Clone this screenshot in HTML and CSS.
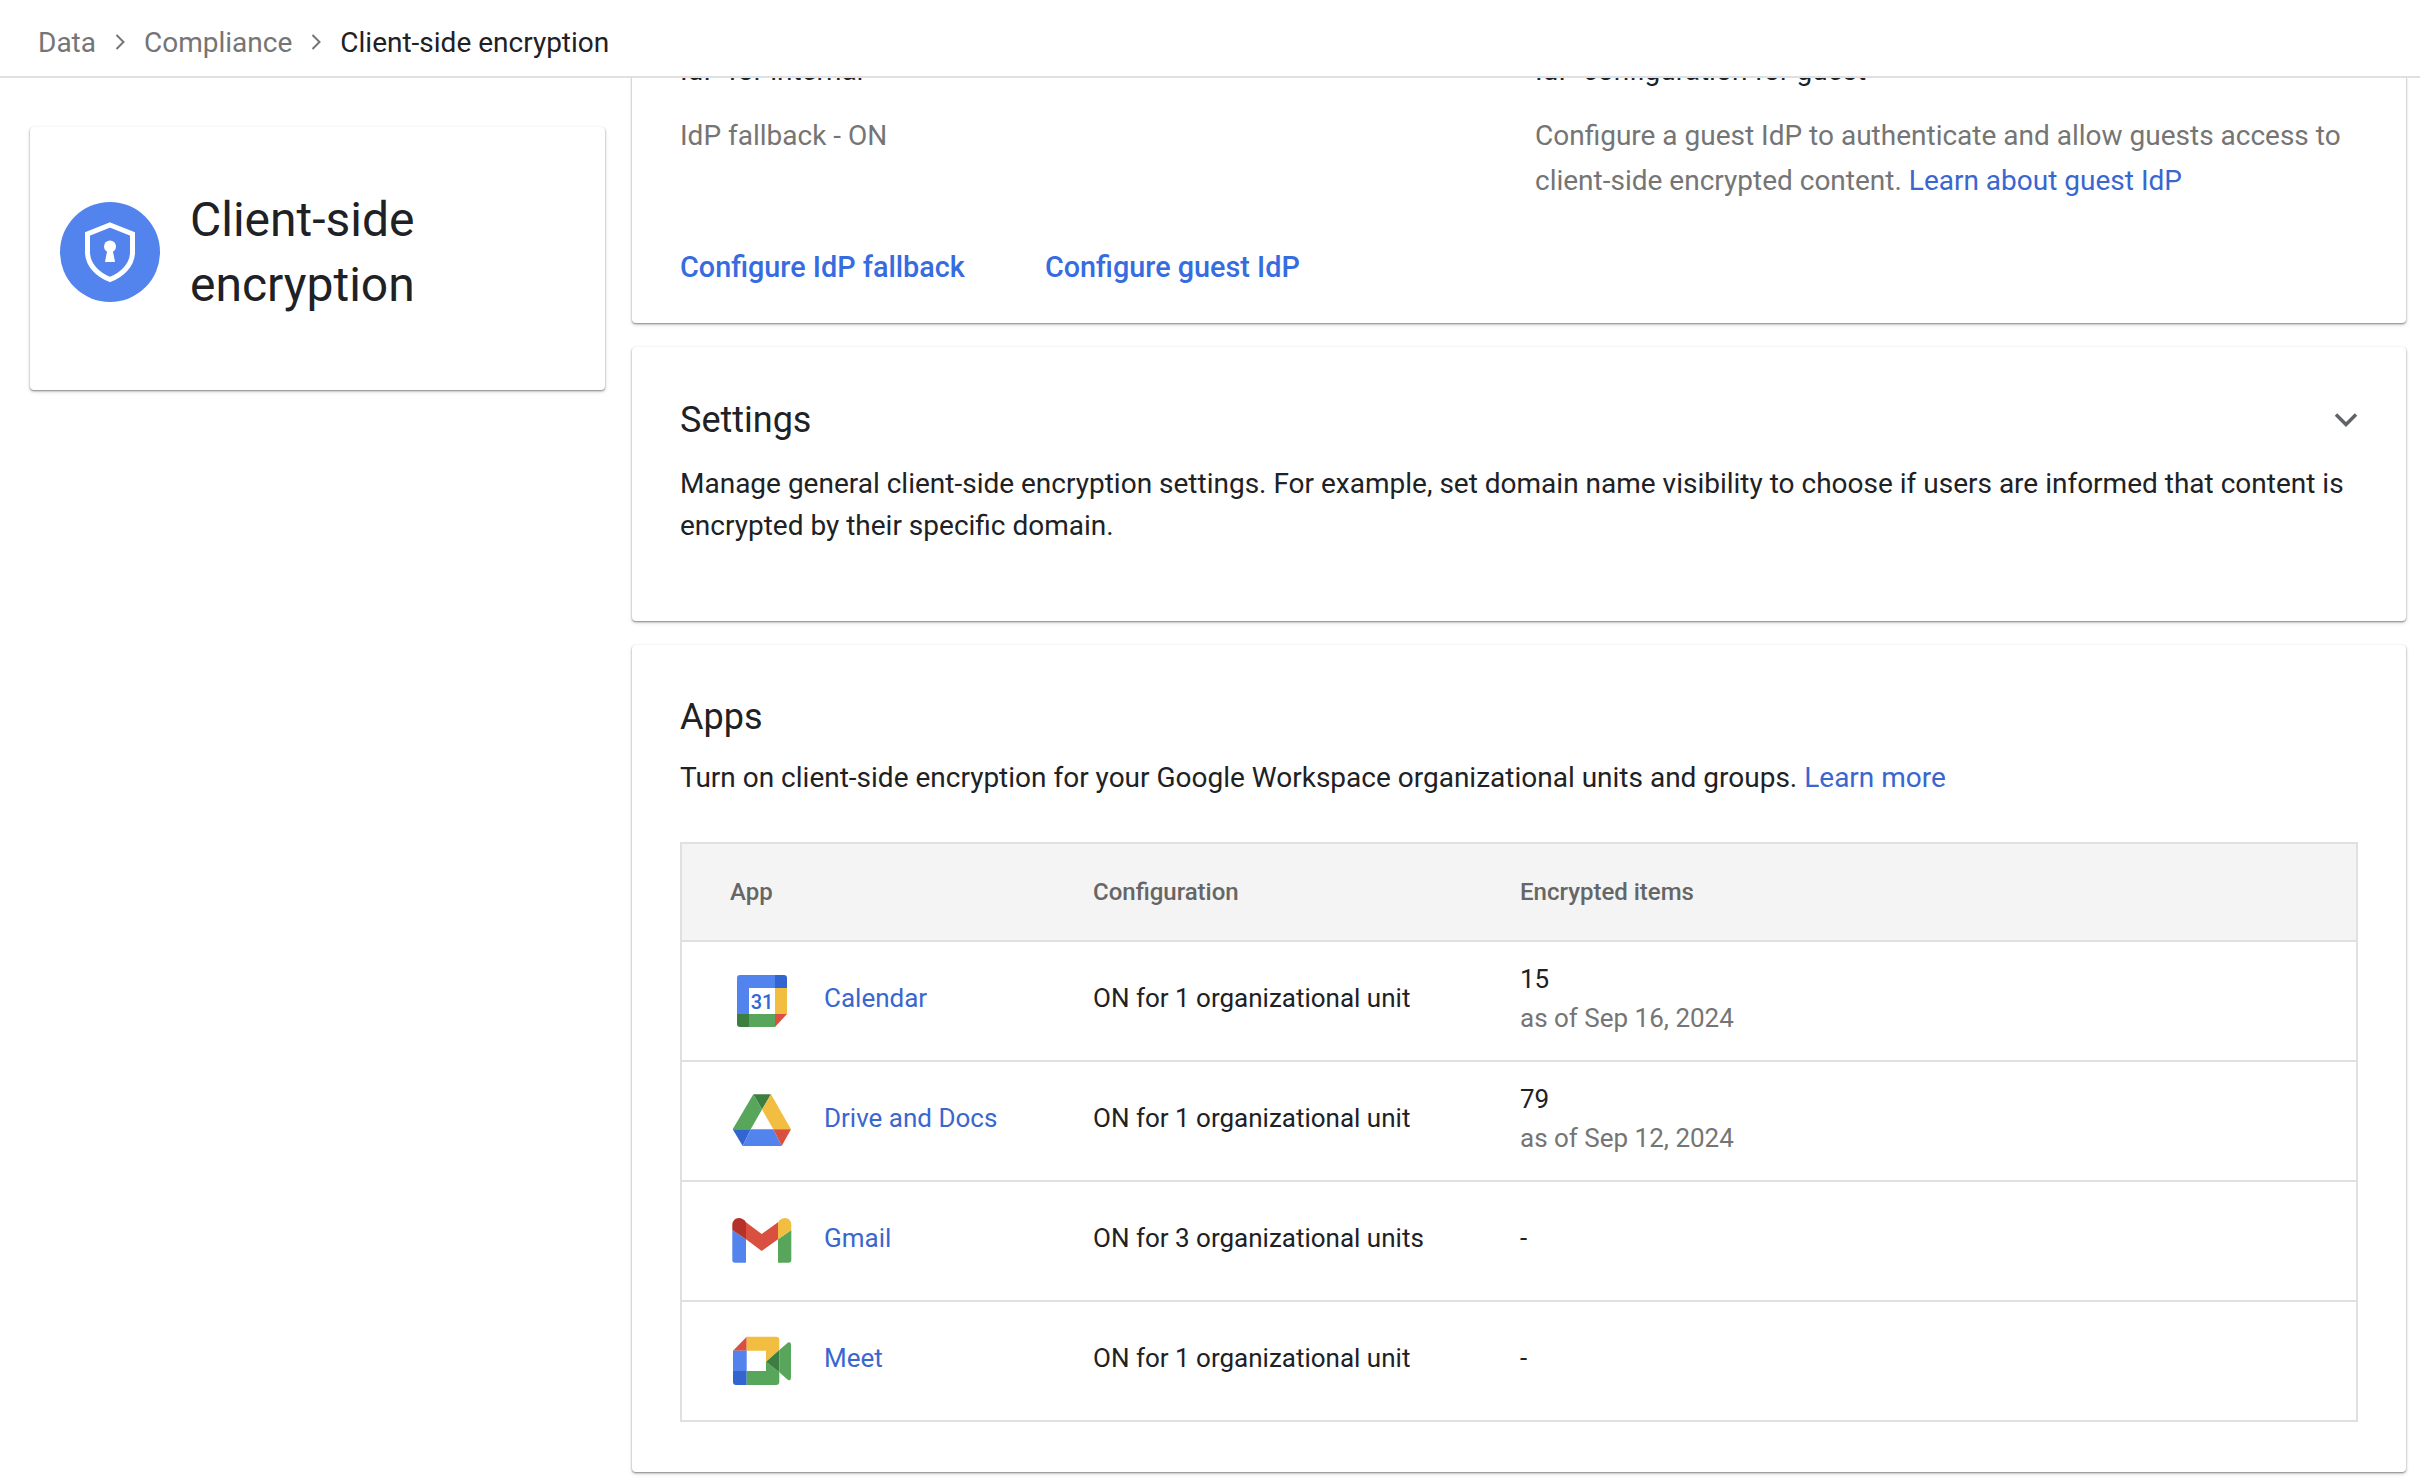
FILE: index.html
```html
<!DOCTYPE html>
<html lang="en">

<head>
  <meta charset="UTF-8">
  <meta name="viewport" content="width=device-width, initial-scale=1.0">
  <title>Client-side encryption</title>
  <link rel="stylesheet" href="styles.css">
</head>

<body>
  <header class="crumbs">
    <span class="crumb">Data</span>
    <svg class="crumb-sep" viewBox="0 0 12 20"><path d="M2.5 3l7 7-7 7" /></svg>
    <span class="crumb">Compliance</span>
    <svg class="crumb-sep" viewBox="0 0 12 20"><path d="M2.5 3l7 7-7 7" /></svg>
    <span class="crumb crumb-current">Client-side encryption</span>
  </header>

  <div class="page">
    <aside class="side">
      <div class="card side-card">
        <svg class="shield" viewBox="0 0 100 100">
          <circle cx="50" cy="50" r="50" fill="#5384ed" />
          <path d="M50 23L72.5 32V50C72.5 63 62 73 50 77.5C38 73 27.5 63 27.5 50V32Z" fill="none" stroke="#fff" stroke-width="5" />
          <circle cx="50" cy="44.5" r="6" fill="#fff" />
          <path d="M47.5 47H52.5L55 60H45Z" fill="#fff" />
        </svg>
        <h1 class="side-title">Client-side encryption</h1>
      </div>
    </aside>

    <main class="content">
      <section class="card idp">
        <div class="idp-cols">
          <div class="idp-col">
            <div class="idp-head">IdP for internal</div>
            <p class="muted">IdP fallback - ON</p>
          </div>
          <div class="idp-col">
            <div class="idp-head">IdP configuration for guest</div>
            <p class="muted">Configure a guest IdP to authenticate and allow guests access to client-side encrypted content. <a class="link" href="#">Learn about guest IdP</a></p>
          </div>
        </div>
        <div class="idp-actions">
          <a class="action" href="#">Configure IdP fallback</a>
          <a class="action" href="#">Configure guest IdP</a>
        </div>
      </section>

      <section class="card settings">
        <div class="card-head">
          <h2 class="card-title">Settings</h2>
          <svg class="chevron" viewBox="0 0 24 16"><path d="M2 2.500l10 10 10-10" /></svg>
        </div>
        <p class="body-text">Manage general client-side encryption settings. For example, set domain name visibility to choose if users are informed that content is encrypted by their specific domain.</p>
      </section>

      <section class="card apps">
        <h2 class="card-title">Apps</h2>
        <p class="body-text apps-intro">Turn on client-side encryption for your Google Workspace organizational units and groups. <a class="link" href="#">Learn more</a></p>

        <table class="apps-table">
          <thead>
            <tr>
              <th class="col-app">App</th>
              <th class="col-conf">Configuration</th>
              <th>Encrypted items</th>
            </tr>
          </thead>
          <tbody>
            <tr>
              <td>
                <div class="app">
                  <svg class="app-icon" viewBox="0 0 60 60">
                    <path d="M8 4H43V17H17V43H5V7Q5 4 8 4Z" fill="#5384ed" />
                    <path d="M43 4H52Q55 4 55 7V17H43Z" fill="#3265cf" />
                    <rect x="43" y="17" width="12" height="26" fill="#f2be42" />
                    <path d="M43 43H55L43 56Z" fill="#da5040" />
                    <rect x="17" y="43" width="26" height="13" fill="#58a65c" />
                    <path d="M5 43H17V56H8Q5 56 5 53Z" fill="#3c7e3f" />
                    <text class="cal-day" x="30" y="37.500" text-anchor="middle">31</text>
                  </svg>
                  <a class="link" href="#">Calendar</a>
                </div>
              </td>
              <td>ON for 1 organizational unit</td>
              <td>15<div class="as-of">as of Sep 16, 2024</div></td>
            </tr>
            <tr>
              <td>
                <div class="app">
                  <svg class="app-icon" viewBox="0 0 60 60">
                    <path d="M21.300 3.300H39L30 18.500Z" fill="#3c7e3f" />
                    <path d="M21.300 3.300L30 18.500L18.700 38.300H.7Z" fill="#58a65c" />
                    <path d="M39 3.300L59 38.300H41.300L30 18.500Z" fill="#f2be42" />
                    <path d="M.7 38.300H18.700L10.700 55Z" fill="#3265cf" />
                    <path d="M18.700 38.300H41.300L49.700 55H10.700Z" fill="#5384ed" />
                    <path d="M41.300 38.300H59L49.700 55Z" fill="#da5040" />
                  </svg>
                  <a class="link" href="#">Drive and Docs</a>
                </div>
              </td>
              <td>ON for 1 organizational unit</td>
              <td>79<div class="as-of">as of Sep 12, 2024</div></td>
            </tr>
            <tr>
              <td>
                <div class="app">
                  <svg class="app-icon" viewBox="0 0 60 60">
                    <path d="M.3 19L14 28.300V51.700H3Q.3 51.700 .3 49Z" fill="#5384ed" />
                    <path d="M59.300 19L46 28.300V51.700H56.500Q59.300 51.700 59.300 49Z" fill="#58a65c" />
                    <path d="M14 11.300L29.700 23L46 11.300V28.300L29.700 40L14 28.300Z" fill="#da5040" />
                    <path d="M.3 19V14C.3 7 9 4 14 11.300V28.300Z" fill="#b5312a" />
                    <path d="M59.300 19V14C59.300 7 51 4 46 11.300V28.300Z" fill="#f2be42" />
                  </svg>
                  <a class="link" href="#">Gmail</a>
                </div>
              </td>
              <td>ON for 3 organizational units</td>
              <td>-</td>
            </tr>
            <tr>
              <td>
                <div class="app">
                  <svg class="app-icon" viewBox="0 0 60 60">
                    <path d="M1 19.700L14.700 5.700V19.700Z" fill="#da5040" />
                    <path d="M14.700 5.700H44Q47.300 5.700 47.300 9V19L34 30.700V19.700H14.700Z" fill="#f2be42" />
                    <rect x="1" y="19.700" width="13.700" height="20.300" fill="#5384ed" />
                    <path d="M1 40H14.700V54H4Q1 54 1 51Z" fill="#3265cf" />
                    <path d="M14.700 40H34V30.700L47.300 41.300V51Q47.300 54 44 54H14.700Z" fill="#58a65c" />
                    <path d="M34 30.700L47.300 19V41.300Z" fill="#3c7e3f" />
                    <path d="M47.300 19L56 11.500Q59 10.500 59 13.500V46.500Q59 50 56 49L47.300 41.300Z" fill="#58a65c" />
                  </svg>
                  <a class="link" href="#">Meet</a>
                </div>
              </td>
              <td>ON for 1 organizational unit</td>
              <td>-</td>
            </tr>
          </tbody>
        </table>
      </section>
    </main>
  </div>
</body>

</html>
```

FILE: styles.css
```css
* {
  margin: 0;
  padding: 0;
  box-sizing: border-box;
}

html,
body {
  height: 100%;
}

body {
  display: flex;
  flex-direction: column;
  overflow: hidden;
  background: #fff;
  color: #202124;
  font-family: Roboto, "Liberation Sans", sans-serif;
  font-size: 28px;
}

a {
  text-decoration: none;
}

/* top bar */
.crumbs {
  display: flex;
  align-items: center;
  flex: 0 0 78px;
  padding: 8px 0 0 38px;
  border-bottom: 2px solid #e0e0e0;
  position: relative;
  z-index: 1;
  background: #fff;
}

.crumb {
  color: #757575;
}

.crumb-current {
  color: #202124;
}

.crumb-sep {
  width: 12px;
  height: 20px;
  margin: 0 18px;
  fill: none;
  stroke: #757575;
  stroke-width: 2;
}

/* layout */
.page {
  display: flex;
  flex: 1;
  min-height: 0;
  padding: 0 14px 0 30px;
  gap: 27px;
}

.side {
  flex: 0 0 575px;
  padding-top: 49px;
}

.content {
  flex: 1;
  min-width: 0;
  display: flex;
  flex-direction: column;
  gap: 24px;
}

.card {
  background: #fff;
  border-radius: 4px;
  box-shadow: 0 1px 2px rgba(60, 64, 67, .6), 0 2px 4px rgba(60, 64, 67, .15);
}

/* sidebar */
.side-card {
  display: flex;
  align-items: center;
  gap: 30px;
  padding: 60px 30px 73px;
}

.shield {
  flex: 0 0 100px;
  width: 100px;
  height: 100px;
}

.side-title {
  font-size: 48px;
  font-weight: 400;
  line-height: 65px;
  width: 300px;
}

/* first card, scrolled under the top bar */
.idp {
  margin-top: -28px;
  padding: 0 48px 0;
  height: 273px;
}

.idp-cols {
  display: flex;
}

.idp-col {
  width: 855px;
}

.idp-col + .idp-col {
  width: auto;
  flex: 1;
}

.idp-head {
  line-height: 42px;
  margin-bottom: 21px;
  color: #202124;
}

.muted {
  color: #757575;
  line-height: 45px;
}

.idp-actions {
  display: flex;
  gap: 80px;
  margin-top: 43px;
}

.action {
  color: #366ce0;
  font-size: 28.800px;
  font-weight: 500;
  line-height: 42px;
}

.link {
  color: #3a66cf;
}

/* settings + apps */
.settings {
  height: 274px;
  padding: 52px 48px 0;
}

.card-head {
  display: flex;
  justify-content: space-between;
  align-items: center;
}

.card-title {
  font-size: 36px;
  font-weight: 400;
  line-height: 42px;
}

.chevron {
  width: 24px;
  height: 16px;
  fill: none;
  stroke: #5f6368;
  stroke-width: 3.500;
}

.body-text {
  line-height: 42px;
  margin-top: 22px;
}

.apps {
  height: 827px;
  padding: 51px 48px 0;
}

.apps-intro {
  margin-top: 19px;
}

/* table */
.apps-table {
  width: 100%;
  margin-top: 43px;
  border-collapse: collapse;
  table-layout: fixed;
  font-size: 26px;
  border-left: 2px solid #e0e0e0;
  border-right: 2px solid #e0e0e0;
}

.apps-table th,
.apps-table td {
  border-top: 2px solid #e0e0e0;
  border-bottom: 2px solid #e0e0e0;
  text-align: left;
  padding: 0;
}

.apps-table th {
  height: 98px;
  background: #f4f4f4;
  color: #666;
  font-size: 24px;
  font-weight: 500;
}

.apps-table td {
  height: 120px;
  padding-bottom: 5px;
  line-height: 39px;
}

.apps-table .col-app {
  width: 412px;
  padding-left: 48px;
}

.col-conf {
  width: 427px;
}

.app {
  display: flex;
  align-items: center;
  gap: 32px;
  padding-left: 50px;
}

.app-icon {
  flex: 0 0 60px;
  width: 60px;
  height: 60px;
  margin-top: 5px;
}

.cal-day {
  fill: #3367d6;
  font-size: 20px;
  font-weight: 500;
}

.as-of {
  color: #757575;
}
```
